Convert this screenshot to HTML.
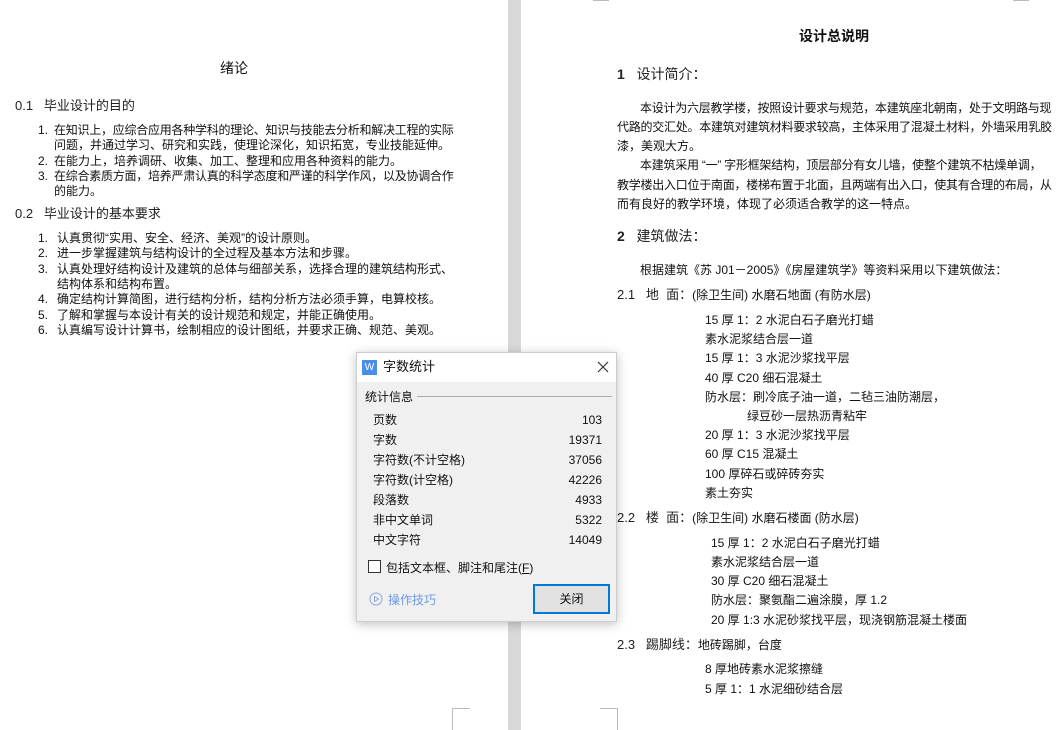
<!DOCTYPE html>
<html><head><meta charset="utf-8"><style>
*{margin:0;padding:0;box-sizing:border-box}
body{width:1064px;height:730px;position:relative;overflow:hidden;background:#fff;font-family:"Liberation Sans","Noto Sans CJK SC",sans-serif;color:#111}
.t{position:absolute;white-space:nowrap;font-size:12px;line-height:14px}
.h{font-size:13px;color:#222}
.m{position:absolute;background:#bbb}
.n{letter-spacing:-0.25px}
.d{font-family:"Liberation Sans","Noto Sans CJK SC",sans-serif;font-size:12px;color:#111}
</style></head><body>
<div style="position:absolute;left:508px;top:0;width:13px;height:730px;background:#d9d9db"></div>
<div class="m" style="left:452px;top:708px;width:18px;height:1px"></div>
<div class="m" style="left:452px;top:708px;width:1px;height:22px"></div>
<div class="m" style="left:600px;top:708px;width:18px;height:1px"></div>
<div class="m" style="left:617px;top:708px;width:1px;height:22px"></div>
<div class="m" style="left:593px;top:0;width:16px;height:1px"></div>
<div class="m" style="left:1013px;top:0;width:16px;height:1px"></div>

<div class="t" style="left:220px;top:61px;font-size:14px">绪论</div>
<div class="t h" style="left:15px;top:99px">0.1&nbsp;&nbsp;&nbsp;毕业设计的目的</div>
<div class="t" style="left:38px;top:123px">1.</div><div class="t n" style="left:54px;top:123px">在知识上，应综合应用各种学科的理论、知识与技能去分析和解决工程的实际</div>
<div class="t" style="left:54px;top:138px">问题，并通过学习、研究和实践，使理论深化，知识拓宽，专业技能延伸。</div>
<div class="t" style="left:38px;top:154px">2.</div><div class="t" style="left:54px;top:154px">在能力上，培养调研、收集、加工、整理和应用各种资料的能力。</div>
<div class="t" style="left:38px;top:169px">3.</div><div class="t n" style="left:54px;top:169px">在综合素质方面，培养严肃认真的科学态度和严谨的科学作风，以及协调合作</div>
<div class="t" style="left:54px;top:184px">的能力。</div>
<div class="t h" style="left:15px;top:207px">0.2&nbsp;&nbsp;&nbsp;毕业设计的基本要求</div>
<div class="t" style="left:38px;top:231px">1.</div><div class="t" style="left:57px;top:231px">认真贯彻“实用、安全、经济、美观”的设计原则。</div>
<div class="t" style="left:38px;top:246px">2.</div><div class="t" style="left:57px;top:246px">进一步掌握建筑与结构设计的全过程及基本方法和步骤。</div>
<div class="t" style="left:38px;top:262px">3.</div><div class="t" style="left:57px;top:262px">认真处理好结构设计及建筑的总体与细部关系，选择合理的建筑结构形式、</div>
<div class="t" style="left:57px;top:277px">结构体系和结构布置。</div>
<div class="t" style="left:38px;top:292px">4.</div><div class="t" style="left:57px;top:292px">确定结构计算简图，进行结构分析，结构分析方法必须手算，电算校核。</div>
<div class="t" style="left:38px;top:308px">5.</div><div class="t" style="left:57px;top:308px">了解和掌握与本设计有关的设计规范和规定，并能正确使用。</div>
<div class="t" style="left:38px;top:323px">6.</div><div class="t" style="left:57px;top:323px">认真编写设计计算书，绘制相应的设计图纸，并要求正确、规范、美观。</div>

<div class="t" style="left:799px;top:29px;font-size:14px;font-weight:bold">设计总说明</div>
<div class="t h" style="left:617px;top:67px;font-size:14px"><b>1</b>&nbsp;&nbsp;&nbsp;设计简介：</div>
<div class="t n" style="left:640px;top:101px">本设计为六层教学楼，按照设计要求与规范，本建筑座北朝南，处于文明路与现</div>
<div class="t n" style="left:617px;top:120px">代路的交汇处。本建筑对建筑材料要求较高，主体采用了混凝土材料，外墙采用乳胶</div>
<div class="t" style="left:617px;top:139px">漆，美观大方。</div>
<div class="t n" style="left:640px;top:158px">本建筑采用 “一” 字形框架结构，顶层部分有女儿墙，使整个建筑不枯燥单调，</div>
<div class="t n" style="left:617px;top:178px">教学楼出入口位于南面，楼梯布置于北面，且两端有出入口，使其有合理的布局，从</div>
<div class="t" style="left:617px;top:197px">而有良好的教学环境，体现了必须适合教学的这一特点。</div>
<div class="t h" style="left:617px;top:229px;font-size:14px"><b>2</b>&nbsp;&nbsp;&nbsp;建筑做法：</div>
<div class="t" style="left:640px;top:263px">根据建筑《苏 J01－2005》《房屋建筑学》等资料采用以下建筑做法：</div>
<div class="t" style="left:617px;top:288px"><span class="h">2.1&nbsp;&nbsp;&nbsp;地&nbsp;&nbsp;面：</span>(除卫生间) 水磨石地面 (有防水层)</div>
<div class="t" style="left:705px;top:313px">15 厚 1：2 水泥白石子磨光打蜡</div>
<div class="t" style="left:705px;top:332px">素水泥浆结合层一道</div>
<div class="t" style="left:705px;top:351px">15 厚 1：3 水泥沙浆找平层</div>
<div class="t" style="left:705px;top:371px">40 厚 C20 细石混凝土</div>
<div class="t" style="left:705px;top:390px">防水层：刷冷底子油一道，二毡三油防潮层，</div>
<div class="t" style="left:747px;top:409px">绿豆砂一层热沥青粘牢</div>
<div class="t" style="left:705px;top:428px">20 厚 1：3 水泥沙浆找平层</div>
<div class="t" style="left:705px;top:447px">60 厚 C15 混凝土</div>
<div class="t" style="left:705px;top:467px">100 厚碎石或碎砖夯实</div>
<div class="t" style="left:705px;top:486px">素土夯实</div>
<div class="t" style="left:617px;top:511px"><span class="h">2.2&nbsp;&nbsp;&nbsp;楼&nbsp;&nbsp;面：</span>(除卫生间) 水磨石楼面 (防水层)</div>
<div class="t" style="left:711px;top:536px">15 厚 1：2 水泥白石子磨光打蜡</div>
<div class="t" style="left:711px;top:555px">素水泥浆结合层一道</div>
<div class="t" style="left:711px;top:574px">30 厚 C20 细石混凝土</div>
<div class="t" style="left:711px;top:593px">防水层：聚氨酯二遍涂膜，厚 1.2</div>
<div class="t" style="left:711px;top:613px">20 厚 1:3 水泥砂浆找平层，现浇钢筋混凝土楼面</div>
<div class="t" style="left:617px;top:638px"><span class="h">2.3&nbsp;&nbsp;&nbsp;踢脚线：</span>地砖踢脚，台度</div>
<div class="t" style="left:705px;top:662px">8 厚地砖素水泥浆擦缝</div>
<div class="t" style="left:705px;top:682px">5 厚 1：1 水泥细砂结合层</div>

<div style="position:absolute;left:356px;top:352px;width:261px;height:270px;background:#f0f0f0;border:1px solid #ccc;box-shadow:0 2px 10px rgba(0,0,0,.25)">
 <div style="height:29px;background:#fff;position:relative">
  <div style="position:absolute;left:5px;top:7px;width:15px;height:15px;background:#4a8fe7;color:#fff;font-size:10px;line-height:15px;text-align:center">W</div>
  <div class="d" style="position:absolute;left:26px;top:6px;font-size:13px;line-height:16px">字数统计</div>
  <svg style="position:absolute;left:240px;top:8px" width="12" height="12"><path d="M1 1L11 11M11 1L1 11" stroke="#333" stroke-width="1.2"/></svg>
 </div>
 <div class="d" style="position:absolute;left:8px;top:35px">统计信息</div>
 <div style="position:absolute;left:60px;top:43px;width:195px;height:1px;background:#aaa"></div>
 <div class="d" style="position:absolute;left:16px;top:57px;width:229px;line-height:20px">
  <div style="display:flex;justify-content:space-between"><span>页数</span><span>103</span></div>
  <div style="display:flex;justify-content:space-between"><span>字数</span><span>19371</span></div>
  <div style="display:flex;justify-content:space-between"><span>字符数(不计空格)</span><span>37056</span></div>
  <div style="display:flex;justify-content:space-between"><span>字符数(计空格)</span><span>42226</span></div>
  <div style="display:flex;justify-content:space-between"><span>段落数</span><span>4933</span></div>
  <div style="display:flex;justify-content:space-between"><span>非中文单词</span><span>5322</span></div>
  <div style="display:flex;justify-content:space-between"><span>中文字符</span><span>14049</span></div>
 </div>
 <div style="position:absolute;left:11px;top:207px;width:13px;height:13px;border:1px solid #333;background:#fff"></div>
 <div class="d" style="position:absolute;left:29px;top:206px">包括文本框、脚注和尾注(<u>F</u>)</div>
 <svg style="position:absolute;left:12px;top:239px" width="14" height="14"><circle cx="7" cy="7" r="6" fill="none" stroke="#8aa8d8"/><path d="M5.5 4.5L9.5 7L5.5 9.5Z" fill="none" stroke="#8aa8d8"/></svg>
 <div class="d" style="position:absolute;left:31px;top:238px;color:#6d9be0">操作技巧</div>
 <div class="d" style="position:absolute;left:176px;top:231px;width:77px;height:30px;border:2px solid #0078d7;background:#e1e1e1;text-align:center;line-height:26px">关闭</div>
</div>
</body></html>
